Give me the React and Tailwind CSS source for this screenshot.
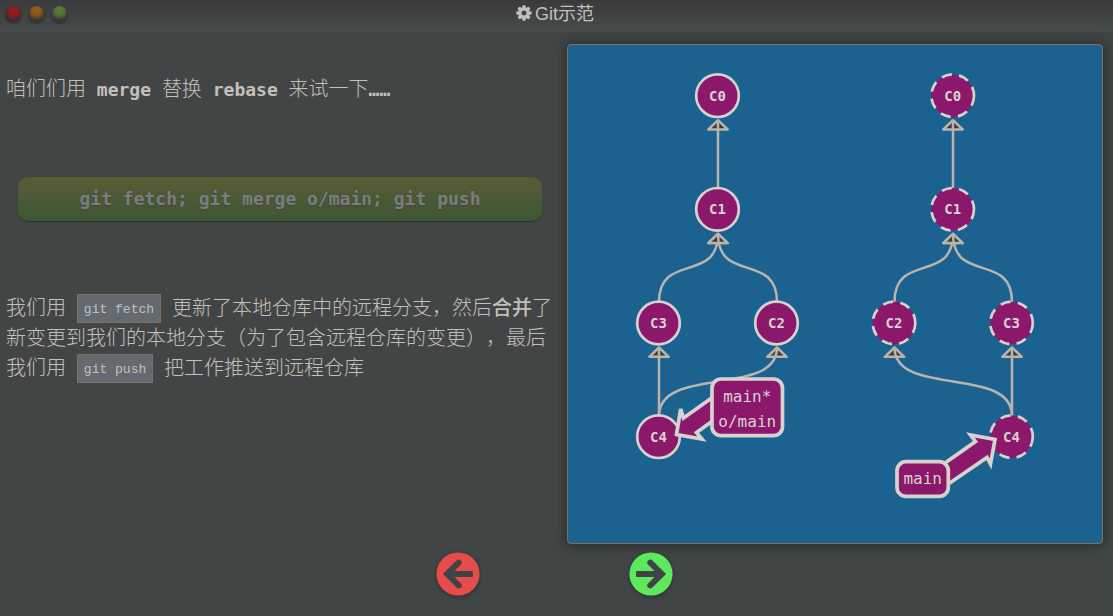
import React from "react";

const COG =
  "M1152 896q0-106-75-181t-181-75-181 75-75 181 75 181 181 75 181-75 75-181zm512-109v222q0 12-8 23t-20 13l-185 28q-19 54-39 91 35 50 107 138 10 12 10 25t-9 23q-27 37-99 108t-94 71q-12 0-26-9l-138-108q-44 23-91 38-16 136-29 186-7 28-36 28h-222q-14 0-24.5-8.5t-11.5-21.5l-28-184q-49-16-90-37l-141 107q-10 9-25 9-14 0-25-11-126-114-165-168-7-10-7-23 0-12 8-23 15-21 51-66.5t54-70.5q-27-50-41-99l-183-27q-13-2-21-12.5t-8-23.5v-222q0-12 8-23t19-13l186-28q14-46 39-92-40-57-107-138-10-12-10-24 0-10 9-23 26-36 98.5-107.5t94.5-71.5q13 0 26 10l138 107q44-23 91-38 16-136 29-186 7-28 36-28h222q14 0 24.5 8.5t11.5 21.5l28 184q49 16 90 37l142-107q9-9 24-9 13 0 25 10 129 119 165 170 7 8 7 22 0 12-8 23-15 21-51 66.5t-54 70.5q26 50 41 98l183 28q13 2 21 12.5t8 23.5z";

const commits = [
  { id: "C0", x: 149.5, y: 50.7 },
  { id: "C1", x: 149.5, y: 164.3 },
  { id: "C3", x: 90.5, y: 278 },
  { id: "C2", x: 208.5, y: 278 },
  { id: "C4", x: 90.5, y: 391.7 },
  { id: "C0", x: 384.7, y: 50.7, remote: true },
  { id: "C1", x: 384.7, y: 164.3, remote: true },
  { id: "C2", x: 326, y: 278, remote: true },
  { id: "C3", x: 443.5, y: 278, remote: true },
  { id: "C4", x: 443.5, y: 391.7, remote: true },
];

// Each edge runs from a child commit up to its parent.
const edges = [
  [150, 164.3, 150, 50.7],
  [91, 278, 150, 164.3],
  [209, 278, 150, 164.3],
  [91, 391.7, 91, 278],
  [91, 391.7, 209, 278],
  [385, 164.3, 385, 50.7],
  [326.5, 278, 385, 164.3],
  [444, 278, 385, 164.3],
  [444, 391.7, 444, 278],
  [444, 391.7, 326.5, 278],
];

function Edge({ points: [x1, y1, x2, y2] }) {
  const start = y1 - 21;
  const end = y2 + 24.5;
  return (
    <g stroke="#b9b4ac" strokeWidth="2.5" strokeLinejoin="round">
      <path d={`M${x2} ${end}L${x2 + 9.7} ${end + 9.3}H${x2 - 9.7}Z`} fill="#3b3e40" />
      <path
        d={`M${x1} ${start}C${x1} ${start - 50} ${x2} ${end + 50} ${x2} ${end}`}
        fill="none"
      />
    </g>
  );
}

function Commit({ id, x, y, remote }) {
  return (
    <g>
      <circle
        cx={x}
        cy={y}
        r="21.3"
        fill="#8b186b"
        stroke="#d6d3cf"
        strokeWidth="2.7"
        strokeDasharray={remote ? "10.3 7.4" : undefined}
      />
      <text
        x={x}
        y={y + 5}
        textAnchor="middle"
        fill="#d6d3cf"
        className="font-['DejaVu_Sans_Mono',monospace] text-[14px] font-bold"
      >
        {id}
      </text>
    </g>
  );
}

function BranchLabel({ arrow, x, y, width, height, lines }) {
  return (
    <g>
      <g fill="#8b186b" stroke="#d6d3cf" strokeWidth="3.7">
        <polygon points={arrow} />
        <rect x={x} y={y} width={width} height={height} rx="9" />
      </g>
      {lines.map((line) => (
        <text
          key={line.text}
          x={x + width / 2}
          y={line.y}
          textAnchor="middle"
          fill="#d6d3cf"
          className="font-['DejaVu_Sans_Mono',monospace] text-[16px]"
        >
          {line.text}
        </text>
      ))}
    </g>
  );
}

function CommitGraph() {
  return (
    <svg viewBox="0 0 534 498" className="block w-full" role="img" aria-label="Git">
      {edges.map((points) => (
        <Edge key={points.join()} points={points} />
      ))}
      {commits.map((c) => (
        <Commit key={`${c.id}-${c.x}`} {...c} />
      ))}
      <BranchLabel
        arrow="150,348.5 115.5,373 112.7,364 108.5,389.5 134,394 128.5,387.5 150,372"
        x={144}
        y={334}
        width={70.5}
        height={56.7}
        lines={[
          { text: "main*", y: 357 },
          { text: "o/main", y: 382 },
        ]}
      />
      <BranchLabel
        arrow="372,421.5 407.5,396.5 402.5,390 427,394.5 422.5,419 419,412.5 376,442"
        x={329}
        y={416.7}
        width={51.3}
        height={34.7}
        lines={[{ text: "main", y: 439 }]}
      />
    </svg>
  );
}

function Mono({ children }) {
  return (
    <span className="font-['DejaVu_Sans_Mono',monospace] text-[18px] leading-none whitespace-pre-wrap">
      {children}
    </span>
  );
}

function Code({ children }) {
  return (
    <code className="border border-[#7b7265] bg-[#636b70] px-1.5 pt-[7px] pb-[5px] align-[2px] font-['Liberation_Mono',monospace] text-[13px] leading-none font-normal whitespace-nowrap">
      {children}
    </code>
  );
}

function WindowDot({ label, className }) {
  return (
    <button
      type="button"
      aria-label={label}
      className={`h-4 w-[15px] rounded-full shadow-[0_1px_1px_1px_#303233,inset_0_-4px_4px_#303233] ${className}`}
    />
  );
}

function ArrowCircle({ className }) {
  return (
    <svg viewBox="0 0 44 44" className={`size-11 ${className}`} aria-hidden="true">
      <circle cx="22" cy="22" r="21.6" fill="currentColor" />
      <path
        d="M22.7 10.6L11.2 22L22.7 33.4"
        fill="none"
        stroke="#404344"
        strokeWidth="6"
        strokeLinecap="round"
      />
      <rect x="12" y="19" width="25" height="6" rx="1.2" fill="#404344" />
    </svg>
  );
}

export default function App() {
  return (
    <div className="min-h-screen bg-[#424545] font-['Noto_Sans_CJK_SC',sans-serif] text-[#c3c0bb]">
      <header className="grid h-8 grid-cols-[1fr_auto_1fr] bg-linear-to-b from-[#3a3a3c] to-[#474b4b] pr-1">
        <div className="flex gap-2 pt-1.5 pl-1.5">
          <WindowDot label="关闭" className="bg-[#951b1d]" />
          <WindowDot label="最小化" className="bg-[#8f5c1c]" />
          <WindowDot label="最大化" className="bg-[#577c3a]" />
        </div>
        <h1 className="flex h-7 items-center gap-0.5 font-['Liberation_Sans','Noto_Sans_CJK_SC',sans-serif] text-[18px] leading-7">
          <svg viewBox="0 0 1792 1792" className="mb-0.5 size-[18px]" fill="currentColor" aria-hidden="true">
            <path d={COG} />
          </svg>
          Git示范
        </h1>
      </header>

      <main className="grid grid-cols-[557fr_536fr] items-start gap-2.5 pt-3 pr-2.5">
        <section className="pt-[29px] text-[20px] leading-[30px] font-light [text-spacing-trim:space-all]">
          <p className="pl-1.5">
            咱们们用
            <Mono>
              {" "}
              <strong className="font-bold">merge</strong>{" "}
            </Mono>
            替换
            <Mono>
              {" "}
              <strong className="font-bold">rebase</strong>{" "}
            </Mono>
            来试一下
            <Mono>
              <span className="font-bold">……</span>
            </Mono>
          </p>
          <button
            type="button"
            className="mt-[74px] ml-[18px] block h-11 w-[calc(100%-33px)] rounded-[10px] bg-linear-to-b from-[#595b35] to-[#3c5735] font-['DejaVu_Sans_Mono',monospace] text-[18px] font-bold text-[#7b7d7c] shadow-[0_1px_1px_#2c2f2f] text-shadow-[0_1px_1px_#3f4741]"
          >
            git fetch; git merge o/main; git push
          </button>
          <p className="mt-[71px] pl-1.5">
            我们用<Mono> </Mono>
            <Code>git fetch</Code>
            <Mono> </Mono>更新了本地仓库中的远程分支，然后<strong className="font-medium">合并</strong>
            了新变更到我们的本地分支（为了包含远程仓库的变更），最后我们用<Mono> </Mono>
            <Code>git push</Code>
            <Mono> </Mono>把工作推送到远程仓库
          </p>
        </section>

        <section className="rounded border border-[#7b7265] bg-[#1b6291] shadow-[0_0_12px_2px_#2c2e2f]">
          <CommitGraph />
        </section>
      </main>

      <footer className="flex justify-center gap-[149px] pt-2 pr-1 pb-4">
        <button type="button" aria-label="上一步" className="text-[#e64c4c] drop-shadow-[0_1px_2px_#2a2c2c]">
          <ArrowCircle className="" />
        </button>
        <button type="button" aria-label="下一步" className="text-[#5de85d] drop-shadow-[0_1px_2px_#2a2c2c]">
          <ArrowCircle className="-scale-x-100" />
        </button>
      </footer>
    </div>
  );
}
